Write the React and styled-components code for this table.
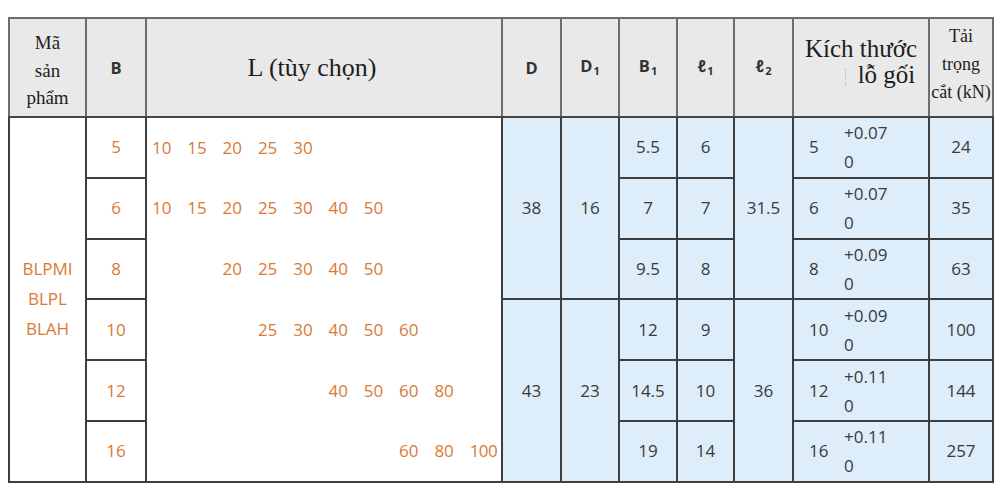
import React from 'react'
import styled, { createGlobalStyle } from 'styled-components'

const GlobalStyle = createGlobalStyle`
  body {
    margin: 0;
    background: #fff;
    font-family: "Open Sans", "Noto Sans", sans-serif;
  }
`

const SLOTS = [10, 15, 20, 25, 30, 40, 50, 60, 80, 100]

const rows = [
  { b: 5, lens: [10, 15, 20, 25, 30], b1: '5.5', l1: 6, hole: 5, tol: '+0.07', load: 24 },
  { b: 6, lens: [10, 15, 20, 25, 30, 40, 50], b1: '7', l1: 7, hole: 6, tol: '+0.07', load: 35 },
  { b: 8, lens: [20, 25, 30, 40, 50], b1: '9.5', l1: 8, hole: 8, tol: '+0.09', load: 63 },
  { b: 10, lens: [25, 30, 40, 50, 60], b1: '12', l1: 9, hole: 10, tol: '+0.09', load: 100 },
  { b: 12, lens: [40, 50, 60, 80], b1: '14.5', l1: 10, hole: 12, tol: '+0.11', load: 144 },
  { b: 16, lens: [60, 80, 100], b1: '19', l1: 14, hole: 16, tol: '+0.11', load: 257 },
]

// D, D1, l2 are shared by three rows each
const groups = {
  0: { d: 38, d1: 16, l2: '31.5' },
  3: { d: 43, d1: 23, l2: '36' },
}

const widths = [77, 60, 356, 59, 58, 58, 57, 59, 136, 64]

const Page = styled.div`
  padding: 17px 6px 0 8px;
`

const Table = styled.table`
  border-collapse: collapse;
  table-layout: fixed;
  width: 984px;
  border: 2px solid #444;
`

const HeadRow = styled.tr`
  height: 99px;
`

const HeadCell = styled.th`
  background: #e9e9e9;
  border: 2px solid #6e6e6e;
  border-bottom-color: #444;
  padding: ${p => p.$pt || 0}px ${p => p.$shift || 0}px ${p => p.$pb || 0}px 0;
  text-align: center;
  vertical-align: middle;
  font-weight: normal;
  color: #1e1e1e;
  font-family: "Liberation Serif", "Times New Roman", serif;
  font-size: ${p => p.$size || 19}px;
  line-height: ${p => p.$lh || 27}px;
`

const Label = styled.span`
  font-family: "Open Sans", "DejaVu Sans", sans-serif;
  font-weight: 700;
  font-size: 16.5px;
  color: #333;
`

const Sub = styled.sub`
  font-size: 11px;
  vertical-align: -3px;
  margin-left: 1px;
`

const HoleLine = styled.span`
  display: block;
  padding-left: 38px;
`

const DotMark = styled.span`
  display: inline-block;
  width: 0;
  height: 17px;
  border-left: 1px dashed #c4c4c4;
  margin-right: 12px;
  vertical-align: -2px;
`

const BodyRow = styled.tr`
  height: 60.8px;
`

const Cell = styled.td`
  border: 2px solid #3e3e3e;
  padding: 0;
  text-align: center;
  vertical-align: middle;
  font-size: 17px;
  line-height: 30px;
  color: ${p => (p.$orange ? '#d97a36' : '#3a3a3a')};
  background: ${p => (p.$orange ? '#fff' : '#ddedfa')};
  font-weight: ${p => (p.$orange ? 500 : 400)};
`

const LengthCell = styled(Cell)`
  border-top: none;
  border-bottom: ${p => (p.$last ? '2px solid #3e3e3e' : 'none')};
  text-align: left;
`

const LengthGrid = styled.div`
  display: grid;
  grid-template-columns: repeat(10, 35.3px);
  padding-left: 5px;
`

const LengthNum = styled.span`
  grid-column: ${p => p.$slot + 1};
  grid-row: 1;
  white-space: nowrap;
  letter-spacing: ${p => (p.$tight ? '-0.6px' : '0')};
`

const HoleCell = styled(Cell)`
  text-align: left;
`

const HoleFit = styled.div`
  display: flex;
  align-items: center;
  padding-left: 15px;
`

const HoleBase = styled.span`
  width: 35px;
`

const Tolerance = styled.div`
  display: flex;
  flex-direction: column;
  line-height: 29px;
`

export default function App() {
  return (
    <Page>
      <GlobalStyle />
      <Table>
        <colgroup>
          {widths.map((w, i) => (
            <col key={i} style={{ width: w }} />
          ))}
        </colgroup>
        <thead>
          <HeadRow>
            <HeadCell $size={19} $lh={27.5} $pt={6}>Mã<br />sản<br />phẩm</HeadCell>
            <HeadCell><Label>B</Label></HeadCell>
            <HeadCell $size={26} $shift={24}>L (tùy chọn)</HeadCell>
            <HeadCell><Label>D</Label></HeadCell>
            <HeadCell><Label>D<Sub>1</Sub></Label></HeadCell>
            <HeadCell><Label>B<Sub>1</Sub></Label></HeadCell>
            <HeadCell><Label>ℓ<Sub>1</Sub></Label></HeadCell>
            <HeadCell><Label>ℓ<Sub>2</Sub></Label></HeadCell>
            <HeadCell $size={25} $lh={26} $pb={11}>
              Kích thước
              <HoleLine><DotMark />lỗ gối</HoleLine>
            </HeadCell>
            <HeadCell $size={18} $lh={28} $pb={8}>Tải<br />trọng<br />cắt (kN)</HeadCell>
          </HeadRow>
        </thead>
        <tbody>
          {rows.map((r, i) => (
            <BodyRow key={r.b}>
              {i === 0 && (
                <Cell $orange rowSpan={6}>BLPMI<br />BLPL<br />BLAH</Cell>
              )}
              <Cell $orange>{r.b}</Cell>
              <LengthCell $orange $last={i === rows.length - 1}>
                <LengthGrid>
                  {r.lens.map(l => (
                    <LengthNum key={l} $slot={SLOTS.indexOf(l)} $tight={l === 100}>
                      {l}
                    </LengthNum>
                  ))}
                </LengthGrid>
              </LengthCell>
              {groups[i] && (
                <>
                  <Cell rowSpan={3}>{groups[i].d}</Cell>
                  <Cell rowSpan={3}>{groups[i].d1}</Cell>
                </>
              )}
              <Cell>{r.b1}</Cell>
              <Cell>{r.l1}</Cell>
              {groups[i] && <Cell rowSpan={3}>{groups[i].l2}</Cell>}
              <HoleCell>
                <HoleFit>
                  <HoleBase>{r.hole}</HoleBase>
                  <Tolerance>
                    <span>{r.tol}</span>
                    <span>0</span>
                  </Tolerance>
                </HoleFit>
              </HoleCell>
              <Cell>{r.load}</Cell>
            </BodyRow>
          ))}
        </tbody>
      </Table>
    </Page>
  )
}
